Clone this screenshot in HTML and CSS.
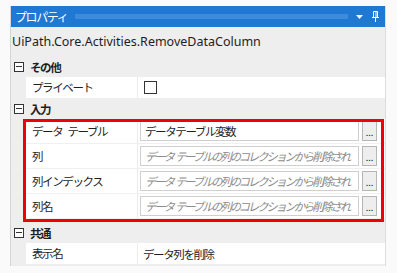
FILE: index.html
```html
<!DOCTYPE html>
<html>
    <head>
        <meta http-equiv="Content-Type" content="text/html; charset=utf-8"/>
        <title>プロパティ</title>
        <link rel="stylesheet" href="styles.css">
    </head>
    <body>
        <div class="panel">
            <div class="titlebar">
                <span class="title">プロパティ</span>
                <span class="grip"></span>
                <svg class="menu" width="8" height="5" viewBox="0 0 8 5"><path d="M0 0 H7 L3.5 4 Z" fill="#fff"/></svg>
                <svg class="pin" width="7" height="11" viewBox="0 0 7 11"><path d="M1.5 0.5 H5.5 V6.5 H1.5 Z M0 6.5 H7 M3.5 6.5 V11" stroke="#fff" stroke-width="1" fill="none"/><path d="M4 1 V6" stroke="#fff" stroke-width="1"/></svg>
            </div>
            <div class="typename">UiPath.Core.Activities.RemoveDataColumn</div>

            <div class="category"><span class="expander"></span>その他</div>
            <div class="row">
                <span class="gutter"></span>
                <span class="label">プライベート</span>
                <span class="value"><span class="checkbox"></span></span>
            </div>

            <div class="category"><span class="expander"></span>入力</div>
            <div class="highlight">
                <div class="row tall">
                    <span class="gutter"></span>
                    <span class="label">データ テーブル</span>
                    <span class="value"><span class="field">データテーブル変数</span><span class="dots">...</span></span>
                </div>
                <div class="row tall">
                    <span class="gutter"></span>
                    <span class="label">列</span>
                    <span class="value"><span class="field hint">データ テーブルの列のコレクションから削除され</span><span class="dots">...</span></span>
                </div>
                <div class="row tall">
                    <span class="gutter"></span>
                    <span class="label">列インデックス</span>
                    <span class="value"><span class="field hint">データ テーブルの列のコレクションから削除され</span><span class="dots">...</span></span>
                </div>
                <div class="row tall">
                    <span class="gutter"></span>
                    <span class="label">列名</span>
                    <span class="value"><span class="field hint">データ テーブルの列のコレクションから削除され</span><span class="dots">...</span></span>
                </div>
            </div>

            <div class="category"><span class="expander"></span>共通</div>
            <div class="row">
                <span class="gutter"></span>
                <span class="label">表示名</span>
                <span class="value"><span class="plain">データ列を削除</span></span>
            </div>
        </div>
    </body>
</html>
```

FILE: styles.css
```css
body {
    margin: 0;
    background-color: #fafafa;
    font-family: "Noto Sans CJK JP", "Noto Sans", sans-serif;
    font-size: 11.5px;
    letter-spacing: -1.4px;
    word-spacing: 4px;
    color: #1e1e1e;
}
.panel {
    margin: 6px 11px 0 10px;
    height: 260px;
    background-color: #eeeeee;
    border-left: 1px solid #d4d4d4;
    border-right: 1px solid #dcdcdc;
}
.titlebar {
    display: flex;
    align-items: center;
    height: 21px;
    background-color: #1f78d1;
    color: #fff;
    padding: 0 6px 0 4px;
}
.title {
    font-size: 12px;
    line-height: 21px;
}
.grip {
    flex: 1;
    height: 5px;
    margin: 0 8px 0 8px;
    background-image: radial-gradient(circle, #5fa2e6 0.6px, transparent 0.8px);
    background-size: 2px 2px;
}
.menu {
    margin-right: 8px;
    margin-top: 2px;
}
.typename {
    font-family: "Noto Sans", sans-serif;
    font-size: 12.5px;
    letter-spacing: 0;
    word-spacing: 0;
    height: 29px;
    line-height: 29px;
    padding-left: 1px;
}
.category {
    display: flex;
    align-items: center;
    height: 21px;
    font-weight: bold;
}
.expander {
    position: relative;
    width: 8px;
    height: 8px;
    border: 1px solid #333;
    margin: 0 6px 0 3px;
    background: #fff;
}
.expander::after {
    content: "";
    position: absolute;
    left: 1px;
    top: 3px;
    width: 6px;
    height: 1px;
    background: #333;
}
.row {
    display: grid;
    grid-template-columns: 15px 112px 1fr;
    height: 21px;
}
.row.tall {
    height: 24px;
    border-bottom: 1px solid #f0f0f0;
}
.gutter {
    background-color: #eeeeee;
}
.label {
    background: #fff;
    padding-left: 6px;
    line-height: 21px;
    border-right: 1px solid #ececec;
    white-space: nowrap;
}
.tall .label {
    line-height: 24px;
}
.value {
    display: flex;
    align-items: center;
    min-width: 0;
    background: #fff;
    padding: 0 8px 0 2px;
    gap: 3px;
}
.checkbox {
    width: 11px;
    height: 11px;
    border: 1px solid #333;
    margin-left: 4px;
}
.plain {
    padding-left: 3px;
}
.field {
    flex: 1;
    min-width: 0;
    height: 18px;
    line-height: 18px;
    border: 1px solid #cfcfcf;
    padding-left: 4px;
    overflow: hidden;
    white-space: nowrap;
}
.hint {
    color: #8c8c8c;
    font-style: italic;
    letter-spacing: -2.3px;
    word-spacing: 2px;
}
.dots {
    width: 13px;
    height: 18px;
    border: 1px solid #b5b5b5;
    background: #eeeeee;
    font-size: 9px;
    letter-spacing: 0;
    line-height: 22px;
    text-align: center;
}
.highlight {
    position: relative;
    margin-bottom: 3px;
}
.highlight::after {
    content: "";
    position: absolute;
    left: 12px;
    right: 1px;
    top: 0;
    bottom: -3px;
    border: 3px solid #f00000;
    pointer-events: none;
}
```
